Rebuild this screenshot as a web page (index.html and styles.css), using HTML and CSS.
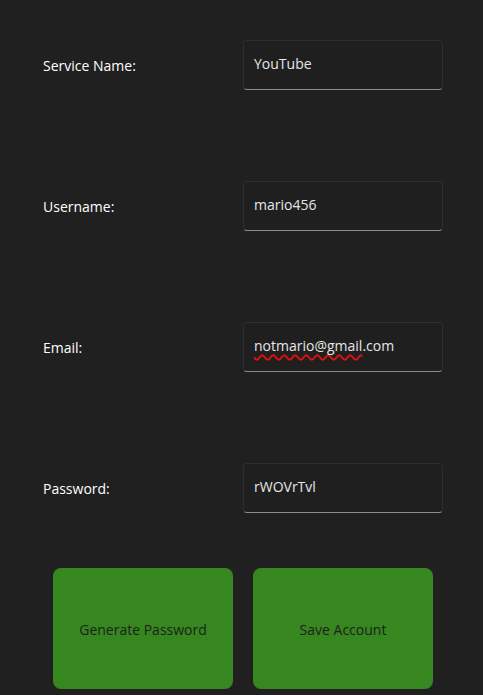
FILE: index.html
```html
<!DOCTYPE html>
<html>
<head>
<meta charset="utf-8">
<link rel="stylesheet" href="styles.css">
</head>
<body>
<div class="form">
  <div class="row">
    <label class="label">Service Name:</label>
    <div class="field">YouTube</div>
  </div>
  <div class="row">
    <label class="label">Username:</label>
    <div class="field">mario456</div>
  </div>
  <div class="row">
    <label class="label">Email:</label>
    <div class="field"><span class="misspelled">notmario@gmail</span>.com</div>
  </div>
  <div class="row">
    <label class="label">Password:</label>
    <div class="field">rWOVrTvl</div>
  </div>
  <div class="buttons">
    <button class="btn">Generate Password</button>
    <button class="btn">Save Account</button>
  </div>
</div>
</body>
</html>
```
FILE: styles.css
```css
html, body {
  margin: 0;
  padding: 0;
  background: #202020;
  height: 100%;
}
body {
  font-family: "Open Sans", "Liberation Sans", sans-serif;
  font-size: 14px;
  color: #ffffff;
}
.form {
  padding: 40px 0 0 43px;
  display: flex;
  flex-direction: column;
  gap: 91px;
}
.row {
  display: grid;
  grid-template-columns: 200px 200px;
  align-items: center;
  height: 50px;
}
.label {
  color: #ffffff;
}
.field {
  box-sizing: border-box;
  height: 50px;
  width: 200px;
  border: 1px solid #2e2e2e;
  border-bottom: 1px solid #8c8c8c;
  border-radius: 4px;
  background: #1f1f1f;
  padding: 0 10px 2px 10px;
  display: flex;
  align-items: center;
  color: #e6e6e6;
  margin-top: -1px;
}
.misspelled {
  text-decoration: underline wavy #e01010;
  text-decoration-thickness: 1.5px;
  text-underline-offset: 3px;
}
.buttons {
  display: flex;
  gap: 20px;
  margin-left: 10px;
  margin-top: -36px;
}
.btn {
  width: 180px;
  height: 121px;
  border: none;
  border-radius: 8px;
  background: #36871f;
  color: #1e1e1e;
  font-family: "Open Sans", "Liberation Sans", sans-serif;
  font-size: 14px;
  padding: 2px 0 0 0;
}
```
